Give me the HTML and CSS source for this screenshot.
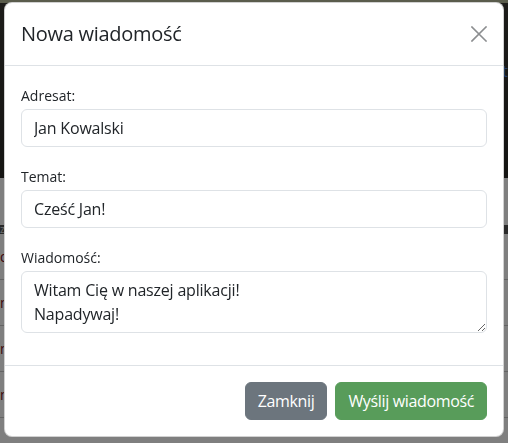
FILE: index.html
```html
<!DOCTYPE html>
<html lang="pl">
<head>
<meta charset="utf-8">
<title>Nowa wiadomość</title>
<link rel="stylesheet" href="styles.css">
</head>
<body>
<div class="page">
  <div class="hero"><span class="hero-text">t</span></div>
  <div class="gap-band"></div>
  <div class="table-head">z</div>
  <div class="row">d</div>
  <div class="row">m</div>
  <div class="row">m</div>
  <div class="row">m</div>
</div>
<div class="backdrop"></div>
<div class="modal">
  <div class="modal-header">
    <h5 class="modal-title">Nowa wiadomość</h5>
    <button class="btn-close" type="button" aria-label="Zamknij">
      <svg viewBox="0 0 16 16" width="16" height="16"><path d="M1 1L15 15M15 1L1 15" stroke="currentColor" stroke-width="1.6" fill="none" stroke-linecap="square"/></svg>
    </button>
  </div>
  <div class="modal-body">
    <div class="field">
      <label class="field-label" for="to">Adresat:</label>
      <input class="control" id="to" type="text" value="Jan Kowalski">
    </div>
    <div class="field">
      <label class="field-label" for="subject">Temat:</label>
      <input class="control" id="subject" type="text" value="Cześć Jan!">
    </div>
    <div class="field">
      <label class="field-label" for="msg">Wiadomość:</label>
      <textarea class="control area" id="msg" rows="2">Witam Cię w naszej aplikacji!
Napadywaj!</textarea>
    </div>
  </div>
  <div class="modal-footer">
    <button class="btn btn-secondary" type="button">Zamknij</button>
    <button class="btn btn-success" type="button">Wyślij wiadomość</button>
  </div>
</div>
</body>
</html>
```
FILE: styles.css
```css
* { box-sizing: border-box; }
html, body { margin: 0; padding: 0; }
body {
  width: 508px;
  height: 443px;
  overflow: hidden;
  background: #ffffff;
  font-family: "Open Sans", "Noto Sans", "DejaVu Sans", sans-serif;
  color: #212529;
}
.page { position: relative; }
.hero {
  height: 178px;
  background: linear-gradient(#b4b898 0, #b4b898 3px, #3a3834 3px, #2a2926 100%);
  position: relative;
}
.hero-text {
  position: absolute;
  right: 0;
  top: 60px;
  color: #4a7ad0;
  font-size: 16px;
}
.gap-band { height: 47px; background: #ffffff; }
.table-head {
  height: 9px;
  background: #555;
  color: #ddd;
  font-size: 10px;
  line-height: 9px;
}
.row {
  height: 46px;
  border-bottom: 1px solid #c8c8c8;
  color: #7a1020;
  font-size: 14px;
  line-height: 46px;
}
.backdrop {
  position: fixed;
  inset: 0;
  background: rgba(0, 0, 0, 0.5);
}
.modal {
  position: fixed;
  left: 4px;
  top: 2px;
  width: 500px;
  background: #ffffff;
  border: 1px solid rgba(0, 0, 0, 0.18);
  border-radius: 8px;
  display: flex;
  flex-direction: column;
}
.modal-header {
  display: flex;
  align-items: center;
  justify-content: space-between;
  padding: 16px;
  border-bottom: 1px solid #dee2e6;
}
.modal-title {
  margin: 0;
  font-size: 20px;
  line-height: 30px;
  font-weight: 400;
  letter-spacing: -0.28px;
  color: #212529;
}
.btn-close {
  width: 16px;
  height: 16px;
  padding: 0;
  border: 0;
  background: transparent;
  color: #8c8e90;
  display: flex;
}
.btn-close svg { display: block; }
.modal-body {
  padding: 16px;
  display: flex;
  flex-direction: column;
}
.field {
  display: flex;
  flex-direction: column;
  margin-bottom: 16px;
}
.field-label {
  display: block;
  font-size: 14px;
  line-height: 21px;
  margin: 3px 0 3px;
  color: #212529;
}
.control {
  display: block;
  width: 100%;
  height: 38px;
  padding: 6px 12px;
  font-family: inherit;
  font-size: 16px;
  line-height: 24px;
  letter-spacing: -0.2px;
  color: #212529;
  background: #ffffff;
  border: 1px solid #dee2e6;
  border-radius: 6px;
  outline: none;
}
.area {
  height: 62px;
  resize: vertical;
  overflow: hidden;
}
.modal-footer {
  display: flex;
  justify-content: flex-end;
  gap: 8px;
  padding: 16px;
  border-top: 1px solid #dee2e6;
}
.btn {
  font-family: inherit;
  font-size: 16px;
  line-height: 24px;
  letter-spacing: -0.35px;
  padding: 6px 12px;
  border: 1px solid transparent;
  border-radius: 6px;
  color: #ffffff;
}
.btn-secondary { background: #6c757d; border-color: #6c757d; }
.btn-success { background: #589c5a; border-color: #589c5a; }
```
